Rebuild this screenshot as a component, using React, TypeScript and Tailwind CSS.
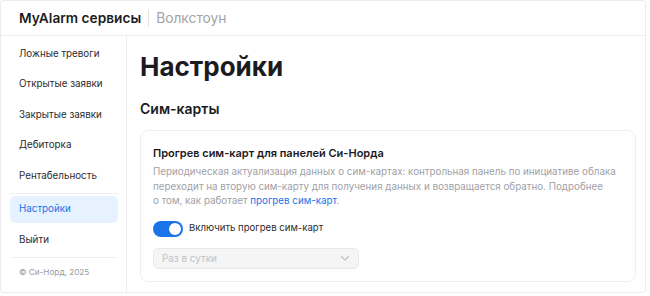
import React from "react";

export default function App() {
  const items = ["Ложные тревоги", "Открытые заявки", "Закрытые заявки", "Дебиторка", "Рентабельность"];
  return (
    <div className="w-[650px] h-[296px] bg-white" style={{ fontFamily: "Inter, 'Noto Sans', sans-serif" }}>
      <div className="w-[646px] h-[293px] border border-[#ececec] rounded-[3px] flex flex-col overflow-hidden">
        <div className="h-[35px] shrink-0 border-b border-[#ececec] flex items-center pl-[18px]">
          <span className="text-[13.7px] font-semibold text-[#1c1c1e] whitespace-nowrap">MyAlarm сервисы</span>
          <span className="w-px h-[18px] bg-[#e3e3e3] ml-[7px] mr-[7px]"></span>
          <span className="text-[13.8px] text-[#a4a4a8] whitespace-nowrap">Волкстоун</span>
        </div>
        <div className="flex flex-1 min-h-0">
          <div className="w-[126px] shrink-0 border-r border-[#ececec] pl-[9px] pr-[8px] pt-[3px] flex flex-col">
            {items.map((t) => (
              <div key={t} className="h-[30.5px] flex items-center pl-[9px] text-[9.8px] text-[#2b2b2e] whitespace-nowrap">{t}</div>
            ))}
            <div className="h-px bg-[#f0f0f0] mt-[1.5px] mb-[2px]"></div>
            <div className="h-[27px] flex items-center pl-[9px] text-[9.8px] text-[#1a73e8] bg-[#e6f2ff] rounded-[6px] whitespace-nowrap">Настройки</div>
            <div className="h-[34px] flex items-center pl-[9px] text-[9.8px] text-[#2b2b2e]">Выйти</div>
            <div className="h-px bg-[#f0f0f0]"></div>
            <div className="h-[28px] flex items-center pl-[9px] text-[8.2px] text-[#9a9a9e] whitespace-nowrap">© Си-Норд, 2025</div>
          </div>
          <div className="flex-1 pl-[13px] pr-[9px] pt-[15px]">
            <div className="text-[26px] font-bold text-[#1c1c1e] leading-[32px] whitespace-nowrap">Настройки</div>
            <div className="text-[14px] font-semibold text-[#1c1c1e] mt-[17px] leading-[18px]">Сим-карты</div>
            <div className="mt-[12px] border border-[#efefef] rounded-[8px] pl-[12px] pr-[12px] pt-[15px] pb-[12px]">
              <div className="text-[11px] font-semibold text-[#1c1c1e] leading-[14px] whitespace-nowrap">Прогрев сим-карт для панелей Си-Норда</div>
              <div className="text-[9.8px] text-[#a1a1a6] leading-[14.5px] mt-[5px] whitespace-nowrap">
                Периодическая актуализация данных о сим-картах: контрольная панель по инициативе облака<br />
                переходит на вторую сим-карту для получения данных и возвращается обратно. Подробнее<br />
                о том, как работает <span className="text-[#1a73e8]">прогрев сим-карт</span>.
              </div>
              <div className="flex items-center mt-[12px]">
                <div className="w-[30px] h-[16px] rounded-full bg-[#1a73e8] relative">
                  <div className="absolute right-[2px] top-[2px] w-[12px] h-[12px] rounded-full bg-white"></div>
                </div>
                <span className="ml-[6px] text-[9.6px] text-[#2b2b2e] whitespace-nowrap">Включить прогрев сим-карт</span>
              </div>
              <div className="mt-[11px] w-[206px] h-[21px] rounded-[5px] border border-[#e8e8e8] bg-[#f5f5f5] flex items-center justify-between pl-[8px] pr-[7px]">
                <span className="text-[9.9px] text-[#c2c2c5]">Раз в сутки</span>
                <svg width="12" height="12" viewBox="0 0 12 12" fill="none"><path d="M2.5 4.5L6 8l3.5-3.5" stroke="#c2c2c5" strokeWidth="1.2" strokeLinecap="round" strokeLinejoin="round"/></svg>
              </div>
            </div>
          </div>
        </div>
      </div>
    </div>
  );
}
